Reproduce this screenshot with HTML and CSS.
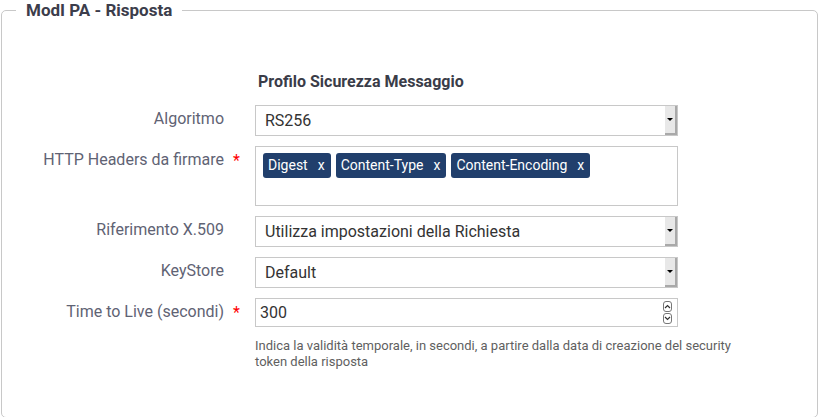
FILE: index.html
```html
<!DOCTYPE html>
<html lang="it">
<head>
<meta charset="utf-8">
<link rel="stylesheet" href="styles.css">
</head>
<body>
<fieldset class="panel">
  <legend class="panel-title">ModI PA - Risposta</legend>
  <div class="form">
    <div class="section-title">Profilo Sicurezza Messaggio</div>

    <div class="row">
      <label class="label">Algoritmo</label>
      <div class="select"><span class="value">RS256</span><span class="arrow"></span></div>
    </div>

    <div class="row">
      <label class="label">HTTP Headers da firmare<span class="req">*</span></label>
      <div class="tags-box">
        <span class="tag">Digest<span class="x">x</span></span>
        <span class="tag">Content-Type<span class="x">x</span></span>
        <span class="tag">Content-Encoding<span class="x">x</span></span>
      </div>
    </div>

    <div class="row">
      <label class="label">Riferimento X.509</label>
      <div class="select"><span class="value">Utilizza impostazioni della Richiesta</span><span class="arrow"></span></div>
    </div>

    <div class="row">
      <label class="label">KeyStore</label>
      <div class="select"><span class="value">Default</span><span class="arrow"></span></div>
    </div>

    <div class="row">
      <label class="label">Time to Live (secondi)<span class="req">*</span></label>
      <div class="field">
        <div class="number">
          <span class="num-value">300</span>
          <span class="spin">
            <span class="spin-btn"><svg width="7" height="5" viewBox="0 0 7 5"><path d="M1 4 L3.5 1.5 L6 4" fill="none" stroke="#333" stroke-width="1.2"/></svg></span>
            <span class="spin-btn"><svg width="7" height="5" viewBox="0 0 7 5"><path d="M1 1 L3.5 3.5 L6 1" fill="none" stroke="#333" stroke-width="1.2"/></svg></span>
          </span>
        </div>
        <div class="help">Indica la validità temporale, in secondi, a partire dalla data di creazione del security token della risposta</div>
      </div>
    </div>
  </div>
</fieldset>
</body>
</html>
```

FILE: styles.css
```css
html, body {
  margin: 0;
  padding: 0;
  background: #fff;
  font-family: Roboto, "Liberation Sans", sans-serif;
  color: #333;
  overflow: hidden;
}
.panel {
  margin: 0 1px;
  padding: 0;
  border: 1px solid #c8c8c8;
  border-radius: 5px;
  height: 418px;
  box-sizing: border-box;
}
.panel-title {
  margin-left: 14px;
  padding: 0 10px;
  font-size: 17px;
  font-weight: bold;
  color: #3c3d4b;
  line-height: 20px;
}
.form {
  padding-top: 52px;
}
.section-title {
  margin-left: 256px;
  font-size: 16px;
  font-weight: bold;
  color: #3a3c48;
  line-height: 20px;
  margin-bottom: 13px;
}
.row {
  display: grid;
  grid-template-columns: 253px 423px;
  margin-bottom: 10px;
}
.label {
  text-align: right;
  padding-right: 31px;
  font-size: 16px;
  color: #5f6374;
  line-height: 18px;
  padding-top: 5px;
  position: relative;
}
.req {
  color: #f00;
  position: absolute;
  right: 15px;
  top: 6px;
  font-size: 16px;
}
.select {
  display: flex;
  height: 31px;
  box-sizing: border-box;
  border: 1px solid #c8c8c8;
  align-items: stretch;
}
.value {
  flex: 1;
  padding-left: 9px;
  font-size: 16px;
  line-height: 29px;
  color: #333;
}
.arrow {
  width: 10px;
  background: #e8e8e8;
  border-right: 2px solid #a9a9a9;
  border-bottom: 2px solid #a9a9a9;
  display: flex;
  align-items: center;
  justify-content: center;
}
.arrow::after {
  content: "";
  border-left: 3px solid transparent;
  border-right: 3px solid transparent;
  border-top: 3px solid #000;
}
.tags-box {
  height: 60px;
  box-sizing: border-box;
  border: 1px solid #c8c8c8;
  padding: 6px 7px;
  display: flex;
  align-items: flex-start;
  gap: 5px;
}
.tag {
  background: #213f6c;
  color: #fff;
  border-radius: 3px;
  font-size: 14px;
  line-height: 25px;
  height: 25px;
  padding: 0 6px 0 5px;
  display: inline-flex;
}
.tag .x {
  margin-left: 10px;
}
.field {
  display: flex;
  flex-direction: column;
}
.number {
  display: flex;
  align-items: center;
  height: 29px;
  box-sizing: border-box;
  border: 1px solid #c8c8c8;
  padding-left: 4px;
  padding-right: 5px;
}
.num-value {
  flex: 1;
  font-size: 16px;
  color: #333;
}
.spin {
  display: flex;
  flex-direction: column;
  gap: 1px;
}
.spin-btn {
  width: 9px;
  height: 11px;
  box-sizing: border-box;
  border: 1px solid #777;
  border-radius: 3px;
  display: flex;
  align-items: center;
  justify-content: center;
}
.help {
  margin-top: 11px;
  font-size: 13px;
  line-height: 16px;
  color: #5f5f5f;
  width: 480px;
}
```
